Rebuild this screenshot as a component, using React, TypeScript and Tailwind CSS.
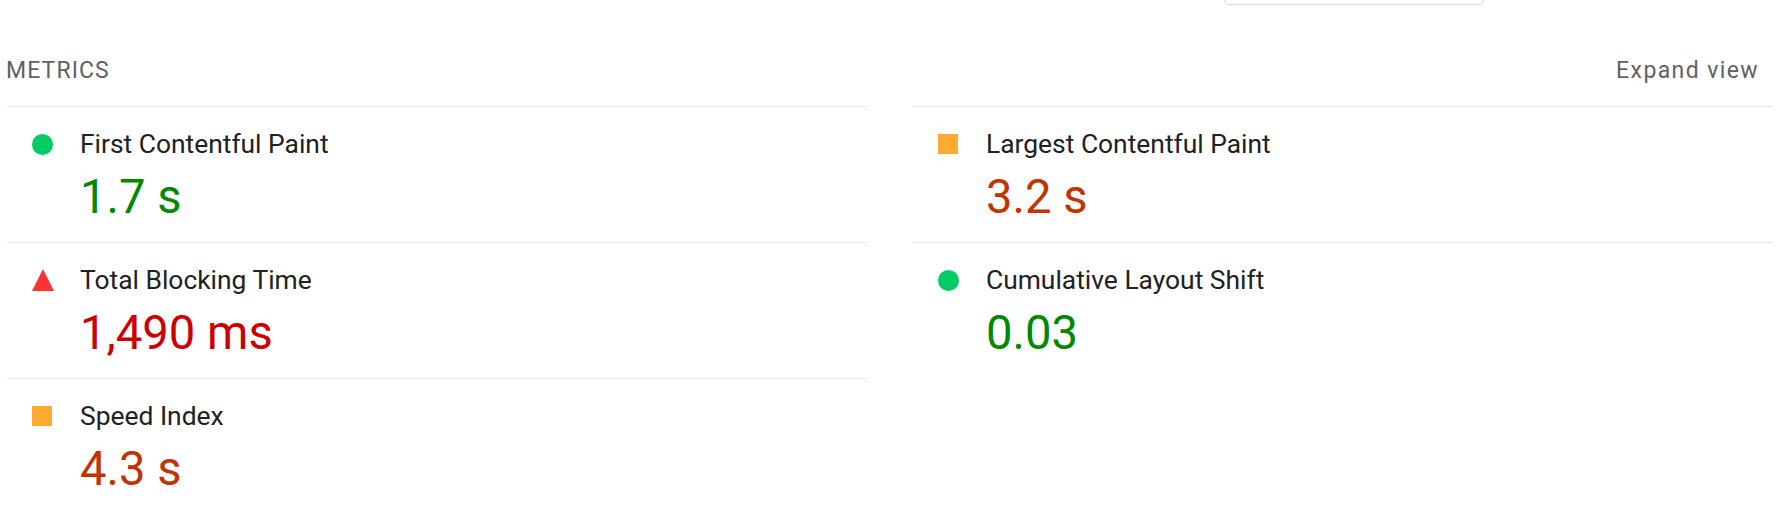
import type { ReactNode } from 'react';

type Rating = 'pass' | 'average' | 'fail';

interface Metric {
  label: string;
  value: string;
  rating: Rating;
}

// order matters: grid fills row by row (left, right, left, ...)
const METRICS: Metric[] = [
  { label: 'First Contentful Paint', value: '1.7 s', rating: 'pass' },
  { label: 'Largest Contentful Paint', value: '3.2 s', rating: 'average' },
  { label: 'Total Blocking Time', value: '1,490 ms', rating: 'fail' },
  { label: 'Cumulative Layout Shift', value: '0.03', rating: 'pass' },
  { label: 'Speed Index', value: '4.3 s', rating: 'average' },
];

const valueColor: Record<Rating, string> = {
  pass: 'text-[#008800]',
  average: 'text-[#c33300]',
  fail: 'text-[#cc0000]',
};

function RatingIcon({ rating }: { rating: Rating }) {
  if (rating === 'pass') {
    return <span className="block w-[21px] h-[21px] rounded-full bg-[#00cc66]" />;
  }
  if (rating === 'average') {
    return <span className="block w-[20px] h-[20px] bg-[#ffaa33]" />;
  }
  return (
    <svg width="22" height="22" viewBox="0 0 22 22" className="block">
      <polygon points="11,0 22,22 0,22" fill="#ff3333" />
    </svg>
  );
}

function MetricCell({ metric }: { metric: Metric }) {
  return (
    <div className="flex border-t border-[#ebebeb] pl-[26px] pt-[19px] pb-[17px]">
      <div className="w-[48px] h-[36px] flex items-center shrink-0">
        <RatingIcon rating={metric.rating} />
      </div>
      <div>
        <div className="text-[26.4px] leading-[36px] text-[#212121]">{metric.label}</div>
        <div className={`mt-[7px] text-[47.2px] leading-[56px] ${valueColor[metric.rating]}`}>
          {metric.value}
        </div>
      </div>
    </div>
  );
}

function Header({ children }: { children: ReactNode }) {
  return (
    <div className="flex items-baseline justify-between pl-[6px] pr-[18px] pt-[49px] pb-[18px]">
      {children}
    </div>
  );
}

export default function App() {
  return (
    <div className="w-[1777px] h-[513px] overflow-hidden bg-white font-['Roboto','Liberation_Sans',sans-serif]">
      {/* bottom edge of the box that sits above, cut off by the screenshot */}
      <div className="h-[5px] pl-[1224px]">
        <div className="w-[260px] h-[5px] border-x border-b border-[#dadce0] rounded-b-[5px]" />
      </div>

      <Header>
        <span className="text-[23px] leading-[34px] tracking-[1.1px] text-[#616161]">METRICS</span>
        <button className="text-[23px] leading-[34px] tracking-[1.4px] text-[#616161]">Expand view</button>
      </Header>

      <div className="grid grid-cols-2 gap-x-[45px] pl-[6px] pr-[4px]">
        {METRICS.map((m) => (
          <MetricCell key={m.label} metric={m} />
        ))}
      </div>
    </div>
  );
}
